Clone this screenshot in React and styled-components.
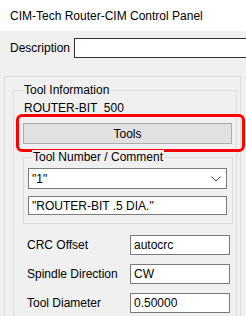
import styled, { createGlobalStyle } from 'styled-components'

const Global = createGlobalStyle`
	html, body {
		margin: 0;
		padding: 0;
		background: #f0f0f0;
	}
	body {
		font-family: "Liberation Sans", Arial, sans-serif;
		font-size: 12px;
		color: #000;
	}
`

const Window = styled.div`
	width: 246px;
	height: 316px;
	overflow: hidden;
	background: #f0f0f0;
	display: flex;
	flex-direction: column;
`

const TitleBar = styled.div`
	height: 31px;
	flex-shrink: 0;
	background: #fff;
	display: flex;
	align-items: center;
	padding-left: 10px;
	font-size: 12px;
	color: #000;
`

const DescRow = styled.div`
	display: flex;
	align-items: center;
	margin-top: 7px;
	padding-left: 10px;
`

const Label = styled.span`
	width: ${props => props.width || 'auto'};
	flex-shrink: 0;
	line-height: 14px;
	white-space: pre;
`

const TextBox = styled.div`
	box-sizing: border-box;
	width: ${props => props.width};
	height: ${props => props.height || '20px'};
	flex-shrink: 0;
	background: #fff;
	border: 1px solid ${props => props.dark ? '#333' : '#7a7a7a'};
	display: flex;
	align-items: center;
	padding-left: 3px;
	line-height: 14px;
	white-space: pre;
`

const Group = styled.div`
	position: relative;
	box-sizing: border-box;
	border: 1px solid #dcdcdc;
	margin: ${props => props.margin || 0};
	padding: ${props => props.padding || 0};
	width: ${props => props.width || 'auto'};
	height: ${props => props.height || 'auto'};
	display: flex;
	flex-direction: column;
`

const Legend = styled.span`
	position: absolute;
	top: -8px;
	left: ${props => props.left || '8px'};
	padding: 0 1px;
	background: #f0f0f0;
	line-height: 14px;
	white-space: nowrap;
`

const ToolName = styled.div`
	line-height: 14px;
	white-space: pre;
	margin-left: 1px;
`

const Highlight = styled.div`
	position: relative;
	margin-top: 8px;
	&::after {
		content: '';
		position: absolute;
		left: -7px;
		right: -9px;
		top: -9px;
		bottom: -8px;
		border: 3px solid #ff0000;
		border-radius: 6px;
		pointer-events: none;
	}
`

const Button = styled.div`
	box-sizing: border-box;
	width: 209px;
	height: 21px;
	background: #e1e1e1;
	border: 1px solid #adadad;
	display: flex;
	align-items: center;
	justify-content: center;
	line-height: 14px;
`

const Combo = styled(TextBox)`
	justify-content: space-between;
	padding-right: 5px;
`

const FieldRow = styled.div`
	display: flex;
	align-items: center;
	padding-left: 4px;
	margin-top: ${props => props.top || '9px'};
`

const Chevron = () => (
	<svg width="10" height="6" viewBox="0 0 10 6">
		<path d="M0.5 0.5 L5 5 L9.5 0.5" fill="none" stroke="#444" strokeWidth="1" />
	</svg>
)

export default function App() {
	return (
		<Window>
			<Global />
			<TitleBar>CIM-Tech Router-CIM Control Panel</TitleBar>
			<DescRow>
				<Label width="64px">Description</Label>
				<TextBox width="200px" dark />
			</DescRow>
			<Group margin="18px 0 0 4px" padding="13px 3px 0 8px" width="237px" height="260px">
				<Group padding="10px 0 0 9px" height="240px">
					<Legend left="9px">Tool Information</Legend>
					<ToolName>{'ROUTER-BIT  500'}</ToolName>
					<Highlight>
						<Button>Tools</Button>
					</Highlight>
					<Group margin="13px 0 0 0" padding="10px 0 0 4px" width="210px" height="67px">
						<Legend left="8px">Tool Number / Comment</Legend>
						<Combo width="199px" height="21px">
							<span>"1"</span>
							<Chevron />
						</Combo>
						<TextBox width="199px" height="19px" style={{ marginTop: '7px' }}>"ROUTER-BIT .5 DIA."</TextBox>
					</Group>
					<FieldRow top="11px">
						<Label width="103px">CRC Offset</Label>
						<TextBox width="100px">autocrc</TextBox>
					</FieldRow>
					<FieldRow>
						<Label width="103px">Spindle Direction</Label>
						<TextBox width="100px">CW</TextBox>
					</FieldRow>
					<FieldRow>
						<Label width="103px">Tool Diameter</Label>
						<TextBox width="100px">0.50000</TextBox>
					</FieldRow>
				</Group>
			</Group>
		</Window>
	)
}
